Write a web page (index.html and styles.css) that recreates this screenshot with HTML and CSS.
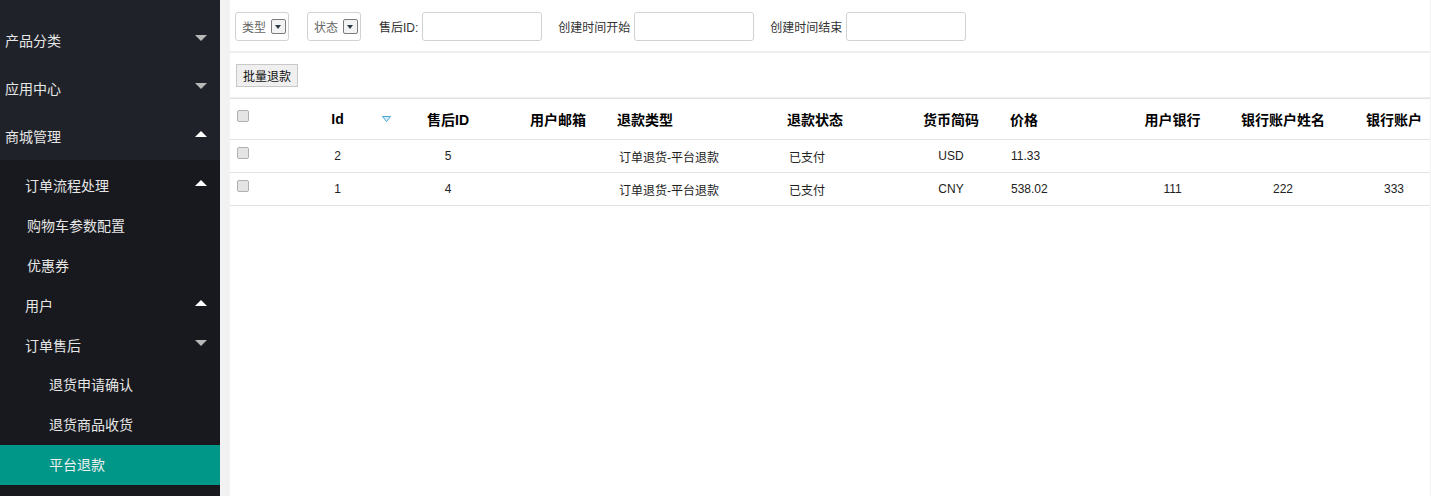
FILE: index.html
```html
<!DOCTYPE html>
<html lang="zh-CN">
<head>
    <meta charset="UTF-8">
    <title>平台退款</title>
    <link rel="stylesheet" href="styles.css">
</head>
<body>
    <aside class="sidebar">
        <div class="nav-item">产品分类<span class="arrow down"></span></div>
        <div class="nav-item">应用中心<span class="arrow down"></span></div>
        <div class="nav-item">商城管理<span class="arrow up"></span></div>
        <div class="nav-child">
            <div class="sub-item">订单流程处理<span class="arrow up"></span></div>
            <div class="sub-item leaf">购物车参数配置</div>
            <div class="sub-item leaf">优惠券</div>
            <div class="sub-item">用户<span class="arrow up"></span></div>
            <div class="sub-item">订单售后<span class="arrow down"></span></div>
            <div class="third-item">退货申请确认</div>
            <div class="third-item">退货商品收货</div>
            <div class="third-item active">平台退款</div>
        </div>
    </aside>

    <main class="content">
        <div class="filter-bar">
            <div class="select-box">类型<span class="select-btn"></span></div>
            <div class="select-box">状态<span class="select-btn"></span></div>
            <label class="field">售后ID:<input type="text"></label>
            <label class="field">创建时间开始<input type="text"></label>
            <label class="field">创建时间结束<input type="text"></label>
        </div>

        <div class="toolbar">
            <button class="btn">批量退款</button>
        </div>

        <table class="grid">
            <colgroup>
                <col style="width:50px">
                <col style="width:115px">
                <col style="width:106px">
                <col style="width:114px">
                <col style="width:170px">
                <col style="width:112px">
                <col style="width:108px">
                <col style="width:110px">
                <col style="width:115px">
                <col style="width:106px">
                <col style="width:116px">
            </colgroup>
            <thead>
                <tr>
                    <th class="chk"><span class="checkbox"></span></th>
                    <th class="sortable">Id
                        <svg class="sort-icon" width="9" height="6" viewBox="0 0 9 6"><path d="M0.5 0.5 H8.5 L4.5 5.5 Z" fill="#d6eef7" stroke="#4aa8d8" stroke-width="1"/></svg>
                    </th>
                    <th>售后ID</th>
                    <th>用户邮箱</th>
                    <th class="left">退款类型</th>
                    <th class="left">退款状态</th>
                    <th>货币简码</th>
                    <th class="left price">价格</th>
                    <th>用户银行</th>
                    <th>银行账户姓名</th>
                    <th>银行账户</th>
                </tr>
            </thead>
            <tbody>
                <tr>
                    <td class="chk"><span class="checkbox"></span></td>
                    <td>2</td>
                    <td>5</td>
                    <td></td>
                    <td class="left">订单退货-平台退款</td>
                    <td class="left">已支付</td>
                    <td>USD</td>
                    <td class="left price">11.33</td>
                    <td></td>
                    <td></td>
                    <td></td>
                </tr>
                <tr>
                    <td class="chk"><span class="checkbox"></span></td>
                    <td>1</td>
                    <td>4</td>
                    <td></td>
                    <td class="left">订单退货-平台退款</td>
                    <td class="left">已支付</td>
                    <td>CNY</td>
                    <td class="left price">538.02</td>
                    <td>111</td>
                    <td>222</td>
                    <td>333</td>
                </tr>
            </tbody>
        </table>
    </main>
</body>
</html>
```

FILE: styles.css
```css
html, body {
    margin: 0;
    height: 496px;
    overflow: hidden;
}
body {
    display: flex;
    background-color: #f2f2f2;
    font-family: "Liberation Sans", "Noto Sans CJK SC", sans-serif;
    color: #333;
}
.sidebar {
    width: 220px;
    flex-shrink: 0;
    background-color: #20222a;
    padding-top: 16px;
    display: flex;
    flex-direction: column;
    font-size: 14px;
    color: #e6e6e6;
}
.nav-item {
    height: 48px;
    padding: 0 13px 0 5px;
    display: flex;
    align-items: center;
    justify-content: space-between;
}
.nav-child {
    flex: 1;
    background-color: #18191e;
    padding-top: 5px;
}
.sub-item {
    height: 40px;
    padding: 0 13px 0 25px;
    display: flex;
    align-items: center;
    justify-content: space-between;
}
.sub-item.leaf {
    padding-left: 27px;
}
.third-item {
    height: 40px;
    line-height: 40px;
    padding-left: 49px;
}
.third-item.active {
    background-color: #009688;
    color: #f0f0f0;
}
.arrow {
    width: 0;
    height: 0;
    border-left: 6px solid transparent;
    border-right: 6px solid transparent;
    margin-bottom: 4px;
}
.arrow.down {
    border-top: 6px solid #b8b8b8;
}
.arrow.up {
    border-bottom: 6px solid #ffffff;
}

.content {
    flex: 1;
    margin-left: 10px;
    margin-right: 1px;
    background-color: #fff;
    overflow: hidden;
    font-size: 12px;
}
.filter-bar {
    height: 39px;
    padding: 12px 0 0 5px;
    border-bottom: 2px solid #eeeeee;
    display: flex;
    align-items: flex-start;
}
.select-box {
    width: 46px;
    height: 27px;
    border: 1px solid #d2d2d2;
    border-radius: 3px;
    margin-right: 18px;
    display: flex;
    align-items: center;
    justify-content: space-between;
    padding: 0 0 0 6px;
    color: #666;
}
.select-btn {
    width: 13px;
    height: 13px;
    border: 1px solid #7c7c7c;
    border-radius: 2px;
    background-color: #f3f3f3;
    margin-right: 2px;
    position: relative;
}
.select-btn::after {
    content: "";
    position: absolute;
    left: 3px;
    top: 5px;
    border-left: 3.5px solid transparent;
    border-right: 3.5px solid transparent;
    border-top: 4px solid #2b3a4a;
}
.field {
    display: flex;
    align-items: center;
    height: 29px;
    margin-right: 16px;
    color: #333;
}
.field input {
    width: 120px;
    height: 29px;
    box-sizing: border-box;
    margin-left: 4px;
    border: 1px solid #d2d2d2;
    border-radius: 3px;
    outline: none;
}
.toolbar {
    height: 33px;
    padding: 11px 0 0 6px;
    border-bottom: 1px solid #eeeeee;
}
.btn {
    height: 23px;
    padding: 0 6px;
    background-color: #efefef;
    border: 1px solid #c8c8c8;
    font-family: inherit;
    font-size: 12px;
    color: #111;
    cursor: pointer;
}

.grid {
    width: 1222px;
    table-layout: fixed;
    border-collapse: collapse;
    border-top: 1px solid #e2e2e2;
}
.grid th {
    height: 40px;
    font-size: 14px;
    font-weight: bold;
    color: #000;
    text-align: center;
    padding: 0;
    border-bottom: 1px solid #e2e2e2;
    white-space: nowrap;
}
.grid td {
    height: 32px;
    text-align: center;
    padding: 0;
    border-bottom: 1px solid #e2e2e2;
    color: #222;
    white-space: nowrap;
}
.grid .left {
    text-align: left;
    padding-left: 2px;
}
.grid td.left {
    padding-left: 4px;
}
.grid .price {
    padding-left: 5px;
}
.grid td.price {
    padding-left: 6px;
}
.grid .chk {
    text-align: left;
    padding-left: 7px;
}
.sortable {
    position: relative;
}
.sort-icon {
    position: absolute;
    right: 4px;
    top: 17px;
}
.checkbox {
    display: inline-block;
    width: 10px;
    height: 10px;
    border: 1px solid #b0b0b0;
    border-radius: 2px;
    background-color: #e4e4e4;
    vertical-align: 4px;
}
```
